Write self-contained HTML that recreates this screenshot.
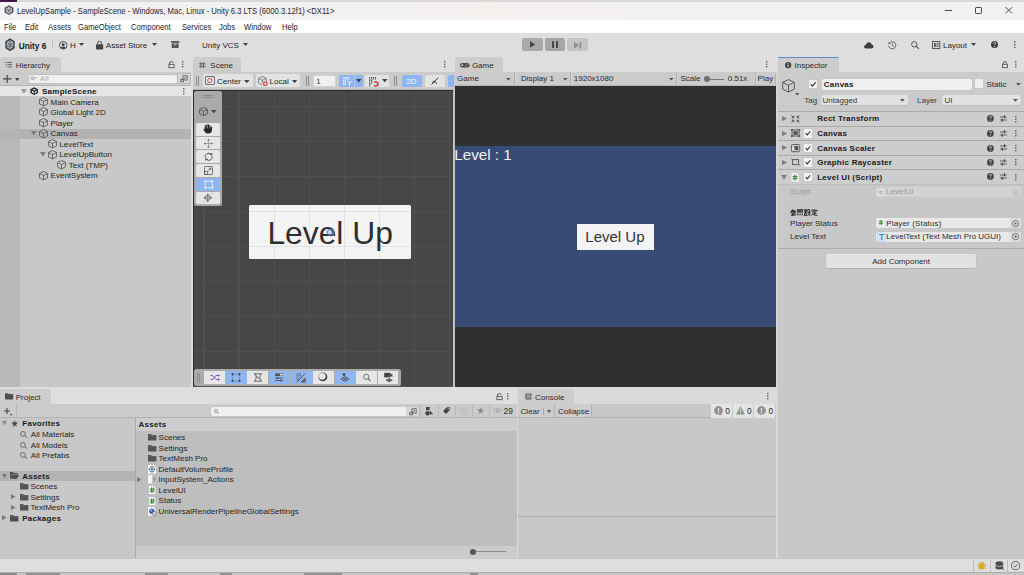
<!DOCTYPE html>
<html><head><meta charset="utf-8">
<style>
*{margin:0;padding:0;box-sizing:border-box}
html,body{width:1024px;height:575px;overflow:hidden;background:#c8c8c8;font-family:"Liberation Sans",sans-serif}
.a{position:absolute}
.t{position:absolute;white-space:nowrap;font-size:8px;line-height:10px;color:#1e1e1e;letter-spacing:0}
.b{font-weight:bold;letter-spacing:0.25px}
svg{position:absolute;overflow:visible}
.w{font-size:9px;transform:scaleX(0.85);transform-origin:0 0;letter-spacing:0;color:#1c1c1c}
</style></head><body>
<!-- ===== TITLE BAR ===== -->
<div class="a" style="left:0;top:0;width:1024px;height:2.3px;background:#d8d8d8"></div>
<div class="a" style="left:0;top:0;width:16.5px;height:2.3px;background:#3e1846"></div>
<div class="a" style="left:0;top:2.3px;width:1024px;height:17.7px;background:linear-gradient(90deg,#f3f1f4 0%,#f4f1f1 40%,#f5f0ee 48%,#f3f0f4 62%,#f3f0f3 100%)"></div>
<svg style="left:3.9px;top:5.4px" width="10" height="10.4" viewBox="0 0 10 10.4"><path d="M5 0.3L9.4 2.8V7.6L5 10.1L0.6 7.6V2.8Z" fill="#4d535b"/><path d="M5 1.8L7.9 3.5V7L5 8.7L2.1 7V3.5Z" fill="#b4b8bd"/><path d="M5 5.3V7.4M5 5.3L3.2 4.3M5 5.3L6.8 4.3" stroke="#4d535b" stroke-width="0.8"/></svg>
<div class="t w" style="left:16.5px;top:5.5px;color:#262626">LevelUpSample - SampleScene - Windows, Mac, Linux - Unity 6.3 LTS (6000.3.12f1) &lt;DX11&gt;</div>
<div class="a" style="left:944.8px;top:10px;width:7.5px;height:0.9px;background:#484848"></div>
<div class="a" style="left:974.5px;top:7.2px;width:7.3px;height:6.8px;border:0.9px solid #484848;border-radius:1.2px"></div>
<svg style="left:1005px;top:7.3px" width="7.5" height="6.5" viewBox="0 0 7.5 6.5"><path d="M0.2 0.1L7.3 6.4M7.3 0.1L0.2 6.4" stroke="#484848" stroke-width="0.9"/></svg>
<!-- ===== MENU BAR ===== -->
<div class="a" style="left:0;top:20px;width:1024px;height:13px;background:#ffffff"></div>
<div class="t w" style="left:3.7px;top:21.5px">File</div>
<div class="t w" style="left:25px;top:21.5px">Edit</div>
<div class="t w" style="left:47.5px;top:21.5px">Assets</div>
<div class="t w" style="left:78px;top:21.5px">GameObject</div>
<div class="t w" style="left:130.5px;top:21.5px">Component</div>
<div class="t w" style="left:181.7px;top:21.5px">Services</div>
<div class="t w" style="left:219px;top:21.5px">Jobs</div>
<div class="t w" style="left:243.7px;top:21.5px">Window</div>
<div class="t w" style="left:282px;top:21.5px">Help</div>
<!-- ===== MAIN TOOLBAR ===== -->
<div class="a" style="left:0;top:33px;width:1024px;height:24px;background:#dedede"></div>
<svg style="left:4.7px;top:38px" width="10" height="13.6" viewBox="0 0 10 13.6"><path d="M5 0.3L9.7 3.3V10.3L5 13.3L0.3 10.3V3.3Z" fill="#3f454d"/><path d="M5 2.2L8.2 4.1V9.3L5 11.2L1.8 9.3V4.1Z" fill="#aeb2b8"/><path d="M5 6.8V9.6M5 6.8L2.8 5.4M5 6.8L7.2 5.4" stroke="#3f454d" stroke-width="0.9"/><circle cx="5" cy="4.2" r="0.7" fill="#3f454d"/><circle cx="3" cy="8.4" r="0.7" fill="#3f454d"/><circle cx="7" cy="8.4" r="0.7" fill="#3f454d"/></svg>
<div class="t b" style="left:18.7px;top:40.9px;color:#1a1a1a;letter-spacing:0;font-size:8.3px">Unity 6</div>
<div class="a" style="left:51.5px;top:41.3px;width:0.9px;height:7.8px;background:#bdbdbd"></div>
<svg style="left:59px;top:40.7px" width="8.5" height="8.5" viewBox="0 0 8.5 8.5"><circle cx="4.25" cy="4.25" r="3.8" fill="none" stroke="#444" stroke-width="0.9"/><circle cx="4.25" cy="3.4" r="1.5" fill="#444"/><path d="M1.6 6.6Q4.25 4.4 6.9 6.6L6 7.5Q4.25 8.4 2.5 7.5Z" fill="#444"/></svg>
<div class="t" style="left:70px;top:40.9px">H</div>
<svg style="left:79px;top:43px" width="5" height="3" viewBox="0 0 5 3"><path d="M0 0H5L2.5 3Z" fill="#444"/></svg>
<svg style="left:95.8px;top:40.9px" width="7.2" height="8.5" viewBox="0 0 7.2 8.5"><path d="M1.6 3.4V2.3Q1.6 0.5 3.6 0.5Q5.6 0.5 5.6 2.3V3.4" fill="none" stroke="#444" stroke-width="1"/><rect x="0" y="3.2" width="7.2" height="5.3" rx="0.8" fill="#444"/></svg>
<div class="t" style="left:105.8px;top:40.9px">Asset Store</div>
<svg style="left:151.8px;top:43px" width="5" height="3" viewBox="0 0 5 3"><path d="M0 0H5L2.5 3Z" fill="#444"/></svg>
<svg style="left:170.6px;top:41.3px" width="8.3" height="7" viewBox="0 0 8.3 7"><rect x="0" y="0" width="8.3" height="1.8" fill="#555"/><rect x="0.7" y="2.4" width="6.9" height="4.6" fill="#555"/><rect x="2.8" y="3.3" width="2.7" height="0.9" fill="#dedede"/></svg>
<div class="t" style="left:202px;top:40.9px">Unity VCS</div>
<svg style="left:242.5px;top:43px" width="5" height="3" viewBox="0 0 5 3"><path d="M0 0H5L2.5 3Z" fill="#444"/></svg>
<!-- play controls -->
<div class="a" style="left:522px;top:38px;width:20.7px;height:13px;background:#a9a9a9;border-radius:2px"></div>
<div class="a" style="left:544.5px;top:38px;width:20.5px;height:13px;background:#a6a6a6;border-radius:2px"></div>
<div class="a" style="left:567px;top:38px;width:20.5px;height:13px;background:#c4c4c4;border-radius:2px"></div>
<svg style="left:530px;top:41.4px" width="5.3" height="6.8" viewBox="0 0 5.3 6.8"><path d="M0 0L5.3 3.4L0 6.8Z" fill="#474747"/></svg>
<div class="a" style="left:552px;top:41.4px;width:2px;height:6.8px;background:#474747;border-radius:0.6px"></div>
<div class="a" style="left:555.8px;top:41.4px;width:2px;height:6.8px;background:#474747;border-radius:0.6px"></div>
<svg style="left:574px;top:41.5px" width="7" height="6.5" viewBox="0 0 7 6.5"><path d="M0 0L5 3.25L0 6.5Z" fill="#8c8c8c"/><rect x="5.6" y="0" width="1.5" height="6.5" fill="#8c8c8c"/></svg>
<!-- right toolbar icons -->
<svg style="left:863.5px;top:41.5px" width="9.5" height="6.5" viewBox="0 0 9.5 6.5"><path d="M2 6.5Q0 6.5 0 4.6Q0 3 1.8 2.9Q2.2 0.3 4.8 0.3Q7.2 0.3 7.6 2.6Q9.5 2.9 9.5 4.6Q9.5 6.5 7.6 6.5Z" fill="#3d3d3d"/></svg>
<svg style="left:887.5px;top:40.7px" width="8.6" height="8.6" viewBox="0 0 8.6 8.6"><path d="M1.3 2.2A3.6 3.6 0 1 1 0.7 4.8" fill="none" stroke="#555" stroke-width="0.9"/><path d="M0.4 0.8L0.6 3.2L2.9 2.7Z" fill="#555"/><path d="M4.3 2.3V4.5L5.8 5.6" fill="none" stroke="#555" stroke-width="0.9"/></svg>
<svg style="left:911.3px;top:40.8px" width="8.2" height="8.2" viewBox="0 0 8.2 8.2"><circle cx="3.3" cy="3.3" r="2.7" fill="none" stroke="#555" stroke-width="1"/><path d="M5.2 5.2L7.9 7.9" stroke="#555" stroke-width="1.2"/></svg>
<svg style="left:932.3px;top:41px" width="8.3" height="8" viewBox="0 0 8.3 8"><rect x="0.5" y="0.5" width="7.3" height="7" fill="none" stroke="#555" stroke-width="1"/><rect x="2" y="2" width="1.8" height="4" fill="#555"/><rect x="4.6" y="2" width="1.8" height="1.6" fill="#555"/><rect x="4.6" y="4.4" width="1.8" height="1.6" fill="#555"/></svg>
<div class="t" style="left:943px;top:40.9px">Layout</div>
<svg style="left:971px;top:43px" width="5" height="3" viewBox="0 0 5 3"><path d="M0 0H5L2.5 3Z" fill="#444"/></svg>
<svg style="left:990.5px;top:41.3px" width="7" height="7" viewBox="0 0 7 7"><circle cx="3.5" cy="3.5" r="3.5" fill="#3a3a3a"/><path d="M2.3 2.6Q2.3 1.4 3.5 1.4Q4.7 1.4 4.7 2.5Q4.7 3.2 3.9 3.6V4.3" fill="none" stroke="#dedede" stroke-width="0.9"/><circle cx="3.6" cy="5.4" r="0.55" fill="#dedede"/></svg>
<svg style="left:1014.3px;top:41.3px" width="1.6" height="7" viewBox="0 0 1.6 7"><circle cx="0.8" cy="0.8" r="0.8" fill="#444"/><circle cx="0.8" cy="3.5" r="0.8" fill="#444"/><circle cx="0.8" cy="6.2" r="0.8" fill="#444"/></svg>
<!-- ===== PANEL BASE ===== -->
<!-- hierarchy -->
<div class="a" style="left:0;top:57px;width:192px;height:15px;background:#dedede"></div>
<div class="a" style="left:0;top:57px;width:60.6px;height:15px;background:#cdcdcd;border-radius:3px 3px 0 0"></div>
<svg style="left:5px;top:61.8px" width="7" height="5.4" viewBox="0 0 7 5.4"><path d="M0 0.5H1.2M2.2 0.5H7M0.8 2.7H2M2.8 2.7H7M1.5 4.9H2.6M3.4 4.9H7" stroke="#555" stroke-width="0.9"/></svg>
<div class="t" style="left:15.7px;top:60.6px;color:#2a2a2a">Hierarchy</div>
<svg style="left:167.8px;top:61px" width="7" height="7" viewBox="0 0 7 7"><path d="M1.5 3.3V2Q1.5 0.5 3.3 0.5Q5 0.5 5 2" fill="none" stroke="#555" stroke-width="0.9"/><rect x="0.9" y="3.3" width="5.2" height="3.4" fill="none" stroke="#555" stroke-width="0.9"/></svg>
<svg style="left:182px;top:61px" width="1.6" height="6.5" viewBox="0 0 1.6 6.5"><circle cx="0.8" cy="0.75" r="0.75" fill="#444"/><circle cx="0.8" cy="3.25" r="0.75" fill="#444"/><circle cx="0.8" cy="5.75" r="0.75" fill="#444"/></svg>
<div class="a" style="left:0;top:72px;width:192px;height:13.6px;background:#cbcbcb"></div>
<div class="a" style="left:0;top:84.8px;width:192px;height:0.8px;background:#b5b5b5"></div>
<svg style="left:3.3px;top:75px" width="8.4" height="7.7" viewBox="0 0 8.4 7.7"><path d="M0 3.85H8.4M4.2 0V7.7" stroke="#444" stroke-width="1.2"/></svg>
<svg style="left:14.6px;top:77.5px" width="4.4" height="3" viewBox="0 0 4.4 3"><path d="M0 0H4.4L2.2 3Z" fill="#444"/></svg>
<div class="a" style="left:27.8px;top:73.5px;width:150px;height:10.3px;background:#f0f0f0;border-radius:2.5px;border:0.6px solid #c2c2c2"></div>
<svg style="left:30.3px;top:76px" width="6" height="5" viewBox="0 0 6 5"><circle cx="2" cy="2" r="1.5" fill="none" stroke="#999" stroke-width="0.8"/><path d="M3.1 3.1L4.2 4.2M4.6 1.8H6L5.3 2.7Z" stroke="#999" stroke-width="0.7" fill="#999"/></svg>
<div class="t" style="left:39.8px;top:73.6px;color:#b0b0b0">All</div>
<div class="a" style="left:177.3px;top:73.3px;width:13.5px;height:10.9px;background:#d6d6d6;border:0.6px solid #b9b9b9;border-radius:0 2px 2px 0"></div>
<svg style="left:179.5px;top:74.8px" width="8" height="8" viewBox="0 0 8 8"><rect x="3" y="0.8" width="4.2" height="4.2" fill="none" stroke="#555" stroke-width="0.8"/><rect x="0.8" y="4.2" width="2.6" height="2.6" fill="none" stroke="#555" stroke-width="0.8"/><path d="M4 4L6.3 1.7" stroke="#555" stroke-width="0.8"/></svg>
<div class="a" style="left:0;top:85.6px;width:192px;height:10.6px;background:#e5e5e5"></div>
<svg style="left:21.2px;top:89.2px" width="5.8" height="4.8" viewBox="0 0 5.8 4.8"><path d="M0 0H5.8L2.9 4.8Z" fill="#9a9a9a"/></svg>
<svg style="left:30.3px;top:87px" width="8.4" height="8.4" viewBox="0 0 8.4 8.4"><path d="M4.2 0.3L8 2.3V6.1L4.2 8.1L0.4 6.1V2.3Z" fill="#1e1e1e"/><path d="M4.2 1.8L6.6 3.1V5.6L4.2 6.8L1.8 5.6V3.1Z" fill="#e5e5e5"/><path d="M4.2 4.1V6.8M4.2 4.1L1.8 3.1M4.2 4.1L6.6 3.1" stroke="#1e1e1e" stroke-width="1.1"/></svg>
<div class="t b" style="left:42px;top:87.3px;color:#141414">SampleScene</div>
<svg style="left:182.6px;top:88px" width="1.6" height="6.5" viewBox="0 0 1.6 6.5"><circle cx="0.8" cy="0.75" r="0.75" fill="#444"/><circle cx="0.8" cy="3.25" r="0.75" fill="#444"/><circle cx="0.8" cy="5.75" r="0.75" fill="#444"/></svg>
<div class="a" style="left:0;top:96.2px;width:192px;height:291px;background:#c8c8c8"></div>
<div class="a" style="left:0;top:96.2px;width:20px;height:291px;background:#b9b9b9"></div>
<div class="a" style="left:0;top:128.8px;width:192px;height:9.8px;background:#b3b3b3"></div>
<svg style="left:38.8px;top:96.9px" width="9" height="9.4" viewBox="0 0 9 9.4"><path d="M4.5 0.5L8.5 2.5V6.9L4.5 8.9L0.5 6.9V2.5Z M0.5 2.5L4.5 4.5L8.5 2.5 M4.5 4.5V8.9" fill="none" stroke="#5a5a5a" stroke-width="0.85" stroke-linejoin="round"/></svg>
<div class="t" style="left:50.6px;top:97.7px">Main Camera</div>
<svg style="left:38.8px;top:107.4px" width="9" height="9.4" viewBox="0 0 9 9.4"><path d="M4.5 0.5L8.5 2.5V6.9L4.5 8.9L0.5 6.9V2.5Z M0.5 2.5L4.5 4.5L8.5 2.5 M4.5 4.5V8.9" fill="none" stroke="#5a5a5a" stroke-width="0.85" stroke-linejoin="round"/></svg>
<div class="t" style="left:50.6px;top:108.2px">Global Light 2D</div>
<svg style="left:38.8px;top:117.9px" width="9" height="9.4" viewBox="0 0 9 9.4"><path d="M4.5 0.5L8.5 2.5V6.9L4.5 8.9L0.5 6.9V2.5Z M0.5 2.5L4.5 4.5L8.5 2.5 M4.5 4.5V8.9" fill="none" stroke="#5a5a5a" stroke-width="0.85" stroke-linejoin="round"/></svg>
<div class="t" style="left:50.6px;top:118.7px">Player</div>
<svg style="left:30.6px;top:131.2px" width="5.8" height="4.8" viewBox="0 0 5.8 4.8"><path d="M0 0H5.8L2.9 4.8Z" fill="#7d7d7d"/></svg>
<svg style="left:38.8px;top:128.5px" width="9" height="9.4" viewBox="0 0 9 9.4"><path d="M4.5 0.5L8.5 2.5V6.9L4.5 8.9L0.5 6.9V2.5Z M0.5 2.5L4.5 4.5L8.5 2.5 M4.5 4.5V8.9" fill="none" stroke="#5a5a5a" stroke-width="0.85" stroke-linejoin="round"/></svg>
<div class="t" style="left:50.6px;top:129.3px">Canvas</div>
<svg style="left:47.5px;top:139.0px" width="9" height="9.4" viewBox="0 0 9 9.4"><path d="M4.5 0.5L8.5 2.5V6.9L4.5 8.9L0.5 6.9V2.5Z M0.5 2.5L4.5 4.5L8.5 2.5 M4.5 4.5V8.9" fill="none" stroke="#5a5a5a" stroke-width="0.85" stroke-linejoin="round"/></svg>
<div class="t" style="left:59.4px;top:139.8px">LevelText</div>
<svg style="left:39.8px;top:152.2px" width="5.8" height="4.8" viewBox="0 0 5.8 4.8"><path d="M0 0H5.8L2.9 4.8Z" fill="#7d7d7d"/></svg>
<svg style="left:47.5px;top:149.5px" width="9" height="9.4" viewBox="0 0 9 9.4"><path d="M4.5 0.5L8.5 2.5V6.9L4.5 8.9L0.5 6.9V2.5Z M0.5 2.5L4.5 4.5L8.5 2.5 M4.5 4.5V8.9" fill="none" stroke="#5a5a5a" stroke-width="0.85" stroke-linejoin="round"/></svg>
<div class="t" style="left:59.4px;top:150.3px">LevelUpButton</div>
<svg style="left:56.8px;top:160.0px" width="9" height="9.4" viewBox="0 0 9 9.4"><path d="M4.5 0.5L8.5 2.5V6.9L4.5 8.9L0.5 6.9V2.5Z M0.5 2.5L4.5 4.5L8.5 2.5 M4.5 4.5V8.9" fill="none" stroke="#5a5a5a" stroke-width="0.85" stroke-linejoin="round"/></svg>
<div class="t" style="left:68.8px;top:160.8px">Text (TMP)</div>
<svg style="left:38.8px;top:170.5px" width="9" height="9.4" viewBox="0 0 9 9.4"><path d="M4.5 0.5L8.5 2.5V6.9L4.5 8.9L0.5 6.9V2.5Z M0.5 2.5L4.5 4.5L8.5 2.5 M4.5 4.5V8.9" fill="none" stroke="#5a5a5a" stroke-width="0.85" stroke-linejoin="round"/></svg>
<div class="t" style="left:50.6px;top:171.3px">EventSystem</div>
<!-- scene -->
<div class="a" style="left:191.4px;top:57px;width:263.6px;height:15px;background:#dedede"></div>
<div class="a" style="left:191.4px;top:72px;width:1.4px;height:315px;background:#dedede"></div>
<div class="a" style="left:193px;top:57px;width:48.3px;height:15px;background:#cdcdcd;border-radius:3px 3px 0 0"></div>
<svg style="left:199.3px;top:61.8px" width="6.6" height="6.2" viewBox="0 0 6.6 6.2"><path d="M0 1.8H6.6M0 4.4H6.6M1.9 0V6.2M4.6 0V6.2" stroke="#555" stroke-width="0.85"/></svg>
<div class="t" style="left:210.3px;top:60.6px;color:#2a2a2a">Scene</div>
<svg style="left:444.2px;top:61.3px" width="1.6" height="6.5" viewBox="0 0 1.6 6.5"><circle cx="0.8" cy="0.75" r="0.75" fill="#444"/><circle cx="0.8" cy="3.25" r="0.75" fill="#444"/><circle cx="0.8" cy="5.75" r="0.75" fill="#444"/></svg>
<div class="a" style="left:193px;top:72px;width:261px;height:18px;background:#cbcbcb"></div>
<div class="a" style="left:193px;top:88.8px;width:261px;height:1.2px;background:#b3b3b3"></div>
<div class="a" style="left:196px;top:75.5px;width:0.9px;height:10.3px;background:#8f8f8f"></div><div class="a" style="left:198.2px;top:75.5px;width:0.9px;height:10.3px;background:#8f8f8f"></div>
<div class="a" style="left:202.9px;top:74.4px;width:50.3px;height:12.8px;background:#e3e3e3;border-radius:1.5px"></div>
<div class="a" style="left:205.3px;top:76.1px;width:9.5px;height:9.4px;border:0.9px solid #707070;border-radius:1px"></div>
<svg style="left:205.3px;top:76.1px" width="9.5" height="9.4" viewBox="0 0 9.5 9.4"><circle cx="4.75" cy="4.5" r="2.1" fill="none" stroke="#d24a4a" stroke-width="1"/><path d="M1.6 7.9L2.6 6.9M7.9 1.5L6.9 2.5" stroke="#707070" stroke-width="0.7"/></svg>
<div class="t" style="left:217px;top:76.9px;color:#262626">Center</div>
<svg style="left:244px;top:79.8px" width="5.6" height="3.3" viewBox="0 0 5.6 3.3"><path d="M0 0H5.6L2.8 3.3Z" fill="#444"/></svg>
<div class="a" style="left:255.7px;top:74.4px;width:44.8px;height:12.8px;background:#e3e3e3;border-radius:1.5px"></div>
<svg style="left:258px;top:75.8px" width="10" height="10.5" viewBox="0 0 10 10.5"><path d="M4.3 0.5L8.3 2.4V5.5M4.3 0.5L0.4 2.4V7.1L4.3 9.1M0.4 2.4L4.3 4.3L8.3 2.4M4.3 4.3V7" fill="none" stroke="#6a6a6a" stroke-width="0.8" stroke-linejoin="round"/><circle cx="7.3" cy="7.7" r="2.4" fill="#d64545"/><path d="M7.3 6.4V9M6 7.7H8.6" stroke="#fff" stroke-width="0.8"/></svg>
<div class="t" style="left:269.6px;top:76.9px;color:#262626">Local</div>
<svg style="left:291.5px;top:79.8px" width="5.2" height="3.3" viewBox="0 0 5.2 3.3"><path d="M0 0H5.2L2.6 3.3Z" fill="#444"/></svg>
<div class="a" style="left:306px;top:75.5px;width:0.9px;height:10.3px;background:#8f8f8f"></div><div class="a" style="left:308.2px;top:75.5px;width:0.9px;height:10.3px;background:#8f8f8f"></div>
<div class="a" style="left:313px;top:74.8px;width:23.4px;height:12.3px;background:#f0f0f0;border-radius:2px;border:0.6px solid #d4d4d4"></div>
<div class="t" style="left:316.2px;top:77.2px;color:#333">1</div>
<div class="a" style="left:338.5px;top:74.8px;width:24.2px;height:12.3px;background:#8db5f0;border-radius:1.5px"></div>
<div class="a" style="left:353.8px;top:74.8px;width:0.8px;height:12.3px;background:#a9c7f3"></div>
<svg style="left:342.6px;top:76.6px" width="8.6" height="9" viewBox="0 0 8.6 9"><rect x="0.1499999999999999" y="0.04999999999999993" width="1.1" height="1.1" fill="#f4f8fe"/><rect x="0.1499999999999999" y="1.45" width="1.1" height="1.1" fill="#f4f8fe"/><rect x="0.1499999999999999" y="2.8499999999999996" width="1.1" height="1.1" fill="#f4f8fe"/><rect x="0.1499999999999999" y="4.25" width="1.1" height="1.1" fill="#f4f8fe"/><rect x="0.1499999999999999" y="5.65" width="1.1" height="1.1" fill="#f4f8fe"/><rect x="0.1499999999999999" y="7.05" width="1.1" height="1.1" fill="#f4f8fe"/><rect x="1.8499999999999999" y="0.04999999999999993" width="1.1" height="1.1" fill="#f4f8fe"/><rect x="1.8499999999999999" y="1.45" width="1.1" height="1.1" fill="#f4f8fe"/><rect x="1.8499999999999999" y="2.8499999999999996" width="1.1" height="1.1" fill="#f4f8fe"/><rect x="1.8499999999999999" y="4.25" width="1.1" height="1.1" fill="#f4f8fe"/><rect x="1.8499999999999999" y="5.65" width="1.1" height="1.1" fill="#f4f8fe"/><rect x="1.8499999999999999" y="7.05" width="1.1" height="1.1" fill="#f4f8fe"/><rect x="3.55" y="0.04999999999999993" width="1.1" height="1.1" fill="#f4f8fe"/><rect x="3.55" y="1.45" width="1.1" height="1.1" fill="#f4f8fe"/><rect x="5.25" y="0.04999999999999993" width="1.1" height="1.1" fill="#f4f8fe"/><rect x="5.25" y="1.45" width="1.1" height="1.1" fill="#f4f8fe"/><path d="M4.6 4L6.5 6.4L8.4 4M6.5 6.4V9" fill="none" stroke="#f4f8fe" stroke-width="1"/></svg>
<svg style="left:355.7px;top:79.1px" width="5.5" height="3.6" viewBox="0 0 5.5 3.6"><path d="M0 0H5.5L2.75 3.6Z" fill="#3a3f48"/></svg>
<div class="a" style="left:365px;top:74.8px;width:24px;height:12.3px;background:#e3e3e3;border-radius:1.5px"></div>
<svg style="left:368.8px;top:76.6px" width="9.5" height="9.6" viewBox="0 0 9.5 9.6"><rect x="0.1499999999999999" y="0.04999999999999993" width="1.1" height="1.1" fill="#4a4a4a"/><rect x="0.1499999999999999" y="1.45" width="1.1" height="1.1" fill="#4a4a4a"/><rect x="0.1499999999999999" y="2.8499999999999996" width="1.1" height="1.1" fill="#4a4a4a"/><rect x="0.1499999999999999" y="4.25" width="1.1" height="1.1" fill="#4a4a4a"/><rect x="0.1499999999999999" y="5.65" width="1.1" height="1.1" fill="#4a4a4a"/><rect x="0.1499999999999999" y="7.05" width="1.1" height="1.1" fill="#4a4a4a"/><rect x="0.1499999999999999" y="8.45" width="1.1" height="1.1" fill="#4a4a4a"/><rect x="2.05" y="0.04999999999999993" width="1.1" height="1.1" fill="#4a4a4a"/><rect x="2.05" y="1.45" width="1.1" height="1.1" fill="#4a4a4a"/><rect x="2.05" y="2.8499999999999996" width="1.1" height="1.1" fill="#4a4a4a"/><rect x="2.05" y="4.25" width="1.1" height="1.1" fill="#4a4a4a"/><rect x="2.05" y="5.65" width="1.1" height="1.1" fill="#4a4a4a"/><rect x="3.95" y="0.04999999999999993" width="1.1" height="1.1" fill="#4a4a4a"/><rect x="3.95" y="1.45" width="1.1" height="1.1" fill="#4a4a4a"/><rect x="5.8500000000000005" y="0.04999999999999993" width="1.1" height="1.1" fill="#4a4a4a"/><rect x="5.8500000000000005" y="1.45" width="1.1" height="1.1" fill="#4a4a4a"/><path d="M4.8 5H6.8Q9 5 9 6.9Q9 8.8 6.8 8.8H4.8" fill="none" stroke="#d03838" stroke-width="1.5"/></svg>
<svg style="left:381.9px;top:79.1px" width="5.5" height="3.6" viewBox="0 0 5.5 3.6"><path d="M0 0H5.5L2.75 3.6Z" fill="#444"/></svg>
<div class="a" style="left:394px;top:75.5px;width:0.9px;height:10.3px;background:#8f8f8f"></div><div class="a" style="left:396.2px;top:75.5px;width:0.9px;height:10.3px;background:#8f8f8f"></div>
<div class="a" style="left:401.5px;top:74.8px;width:20.9px;height:12.3px;background:#8db5f0;border-radius:1.5px"></div>
<div class="t" style="left:406.2px;top:77px;color:#f2f6fd">2D</div>
<div class="a" style="left:425px;top:74.8px;width:20.4px;height:12.3px;background:#e3e3e3;border-radius:1.5px"></div>
<svg style="left:431.2px;top:77px" width="8" height="8" viewBox="0 0 8 8"><path d="M0.5 7.5L7.3 0.7" stroke="#333" stroke-width="1"/><path d="M1 4.5H2.5L4.5 2.5V6.5L2.5 5.5H1Z" fill="#555"/><path d="M5.6 5.3V7.3" stroke="#555" stroke-width="0.7"/></svg>
<div class="a" style="left:447.6px;top:74.8px;width:6px;height:12.3px;background:#8db5f0;border-radius:1.5px 0 0 1.5px"></div>
<div class="a" style="left:192.8px;top:89.8px;width:262px;height:297.6px;background:#2e2e2e"></div>
<div class="a" style="left:194px;top:90.6px;width:259.6px;height:296px;background:#474747;overflow:hidden"><div class="a" style="left:9.4px;top:0;width:1.4px;height:296px;background:#4f4f4f"></div><div class="a" style="left:44.45px;top:0;width:1.4px;height:296px;background:#4f4f4f"></div><div class="a" style="left:79.5px;top:0;width:1.4px;height:296px;background:#4f4f4f"></div><div class="a" style="left:114.55px;top:0;width:1.4px;height:296px;background:#4f4f4f"></div><div class="a" style="left:149.6px;top:0;width:1.4px;height:296px;background:#4f4f4f"></div><div class="a" style="left:184.65px;top:0;width:1.4px;height:296px;background:#4f4f4f"></div><div class="a" style="left:219.7px;top:0;width:1.4px;height:296px;background:#4f4f4f"></div><div class="a" style="left:254.75px;top:0;width:1.4px;height:296px;background:#4f4f4f"></div><div class="a" style="top:15.1px;left:0;height:1.4px;width:260px;background:#4f4f4f"></div><div class="a" style="top:50.15px;left:0;height:1.4px;width:260px;background:#4f4f4f"></div><div class="a" style="top:85.2px;left:0;height:1.4px;width:260px;background:#4f4f4f"></div><div class="a" style="top:120.25px;left:0;height:1.4px;width:260px;background:#4f4f4f"></div><div class="a" style="top:155.3px;left:0;height:1.4px;width:260px;background:#4f4f4f"></div><div class="a" style="top:190.35px;left:0;height:1.4px;width:260px;background:#4f4f4f"></div><div class="a" style="top:225.4px;left:0;height:1.4px;width:260px;background:#4f4f4f"></div><div class="a" style="top:260.45px;left:0;height:1.4px;width:260px;background:#4f4f4f"></div><div class="a" style="top:295.5px;left:0;height:1.4px;width:260px;background:#4f4f4f"></div></div>
<div class="a" style="left:194px;top:91px;width:28px;height:114.7px;background:#aaaaaa;border-radius:2.5px"></div>
<div class="a" style="left:202.8px;top:95px;width:10.4px;height:0.9px;background:#8a8a8a"></div><div class="a" style="left:202.8px;top:97px;width:10.4px;height:0.9px;background:#8a8a8a"></div>
<svg style="left:198.9px;top:107px" width="9" height="9" viewBox="0 0 9 9"><path d="M4.5 0.4L8.4 2.4V6.6L4.5 8.6L0.6 6.6V2.4Z M0.6 2.4L4.5 4.4L8.4 2.4 M4.5 4.4V8.6" fill="none" stroke="#4a4a4a" stroke-width="0.8" stroke-linejoin="round"/></svg>
<svg style="left:210.7px;top:110px" width="5.5" height="3.2" viewBox="0 0 5.5 3.2"><path d="M0 0H5.5L2.75 3.2Z" fill="#444"/></svg>
<div class="a" style="left:196.4px;top:122.8px;width:23.7px;height:12.9px;background:#e6e6e6;border-radius:1.5px"></div>
<div class="a" style="left:196.4px;top:136.6px;width:23.7px;height:12.9px;background:#e6e6e6;border-radius:1.5px"></div>
<div class="a" style="left:196.4px;top:150.4px;width:23.7px;height:12.9px;background:#e6e6e6;border-radius:1.5px"></div>
<div class="a" style="left:196.4px;top:164.2px;width:23.7px;height:12.9px;background:#e6e6e6;border-radius:1.5px"></div>
<div class="a" style="left:196.4px;top:178px;width:23.7px;height:12.9px;background:#8fb6f0;border-radius:1.5px"></div>
<div class="a" style="left:196.4px;top:191.5px;width:23.7px;height:12.9px;background:#e6e6e6;border-radius:1.5px"></div>
<svg style="left:203.3px;top:124.4px" width="9.5" height="9.6" viewBox="0 0 9.5 9.6"><g fill="none" stroke="#262626" stroke-linecap="round" stroke-width="1.25"><path d="M2.4 5.6V2"/><path d="M3.9 5V1"/><path d="M5.4 5V0.9"/><path d="M6.9 5.2V1.8"/><path d="M8.4 5.6V3.2"/></g><path d="M1.8 4.6L2.4 4.2H8.9V6.8Q8.5 9.4 6 9.4H4Q2.8 9.4 2 8L0.3 5.4Q0.6 4.6 1.3 4.9Z" fill="#262626"/></svg>
<svg style="left:203.8px;top:138.6px" width="9" height="9" viewBox="0 0 9 9"><path d="M4.5 1V8M1 4.5H8" stroke="#555" stroke-width="0.75" stroke-dasharray="1 0.8"/><path d="M4.5 0L5.8 1.5H3.2ZM4.5 9L5.8 7.5H3.2ZM0 4.5L1.5 3.2V5.8ZM9 4.5L7.5 3.2V5.8Z" fill="#555"/></svg>
<svg style="left:203.5px;top:152px" width="9.5" height="9.6" viewBox="0 0 9.5 9.6"><path d="M1.3 5.5A3.5 3.5 0 0 1 7 2.1" fill="none" stroke="#505050" stroke-width="0.95"/><path d="M8.2 4.1A3.5 3.5 0 0 1 2.5 7.5" fill="none" stroke="#505050" stroke-width="0.95"/><path d="M8.4 0.8L8 3.6L5.5 2.4Z" fill="#505050"/><path d="M1.1 8.8L1.5 6L4 7.2Z" fill="#505050"/></svg>
<svg style="left:204px;top:166.2px" width="9" height="9" viewBox="0 0 9 9"><rect x="0.5" y="0.5" width="8" height="8" rx="0.6" fill="none" stroke="#5a5a5a" stroke-width="0.8"/><rect x="0.5" y="5.3" width="3.2" height="3.2" fill="none" stroke="#5a5a5a" stroke-width="0.8"/><path d="M4.3 4.7L6.8 2.2M4.7 2.2H6.8V4.3" fill="none" stroke="#5a5a5a" stroke-width="0.8"/></svg>
<svg style="left:203.6px;top:180px" width="9.5" height="9" viewBox="0 0 9.5 9"><rect x="1.2" y="1.2" width="7.1" height="6.6" fill="none" stroke="#f4f7fc" stroke-width="0.8"/><circle cx="1.2" cy="1.2" r="0.9" fill="#f4f7fc"/><circle cx="8.3" cy="1.2" r="0.9" fill="#f4f7fc"/><circle cx="1.2" cy="7.8" r="0.9" fill="#f4f7fc"/><circle cx="8.3" cy="7.8" r="0.9" fill="#f4f7fc"/></svg>
<svg style="left:203.3px;top:193.3px" width="10" height="9.6" viewBox="0 0 10 9.6"><circle cx="4.8" cy="4.8" r="2.6" fill="none" stroke="#555" stroke-width="0.7"/><path d="M4.8 1.2V8.4M1.2 4.8H8.4" stroke="#555" stroke-width="0.7"/><path d="M4.8 0.6L5.8 1.8H3.8ZM4.8 9L5.8 7.8H3.8ZM0.6 4.8L1.8 3.8V5.8ZM9 4.8L7.8 3.8V5.8Z" fill="#555"/><path d="M0.4 9.2L1.4 8.2M9.2 0.4L8.2 1.4" stroke="#555" stroke-width="0.6"/></svg>
<div class="a" style="left:249.1px;top:205.1px;width:162.3px;height:54.3px;background:#f4f4f4;border-radius:1.5px;overflow:hidden"><div class="a" style="left:24.5px;top:0;width:1.2px;height:55px;background:#e3e3e3"></div><div class="a" style="left:59.55px;top:0;width:1.2px;height:55px;background:#e3e3e3"></div><div class="a" style="left:94.6px;top:0;width:1.2px;height:55px;background:#e3e3e3"></div><div class="a" style="left:129.65px;top:0;width:1.2px;height:55px;background:#e3e3e3"></div><div class="a" style="top:5.85px;left:0;height:1.2px;width:163px;background:#e3e3e3"></div><div class="a" style="top:40.9px;left:0;height:1.2px;width:163px;background:#e3e3e3"></div></div>
<div class="t" style="left:267.4px;top:214.6px;font-size:31.8px;line-height:36px;color:#2e2e2e">Level Up</div>
<svg style="left:326px;top:228.3px" width="9" height="9" viewBox="0 0 9 9"><circle cx="4.5" cy="4.5" r="3.3" fill="rgba(120,160,220,0.35)" stroke="#4b79c0" stroke-width="1.3" stroke-opacity="0.75"/></svg>
<div class="a" style="left:194.1px;top:369.3px;width:206.7px;height:16.3px;background:#aaaaaa;border-radius:2.5px"></div>
<div class="a" style="left:197px;top:372.5px;width:0.9px;height:10.5px;background:#8f8f8f"></div><div class="a" style="left:199.2px;top:372.5px;width:0.9px;height:10.5px;background:#8f8f8f"></div>
<div class="a" style="left:204.2px;top:371.1px;width:21.1px;height:12.9px;background:#e6e6e6"></div>
<div class="a" style="left:225.3px;top:371.1px;width:21.6px;height:12.9px;background:#8fb6f0"></div>
<div class="a" style="left:246.9px;top:371.1px;width:20.9px;height:12.9px;background:#e6e6e6"></div>
<div class="a" style="left:268.5px;top:371.1px;width:21.4px;height:12.9px;background:#8fb6f0"></div>
<div class="a" style="left:290.5px;top:371.1px;width:22.4px;height:12.9px;background:#8fb6f0"></div>
<div class="a" style="left:312.9px;top:371.1px;width:20.9px;height:12.9px;background:#e6e6e6"></div>
<div class="a" style="left:334.5px;top:371.1px;width:21.7px;height:12.9px;background:#8fb6f0"></div>
<div class="a" style="left:356.2px;top:371.1px;width:21.3px;height:12.9px;background:#e6e6e6"></div>
<div class="a" style="left:378.2px;top:371.1px;width:20.1px;height:12.9px;background:#e6e6e6"></div>
<svg style="left:209.9px;top:373px" width="10" height="9" viewBox="0 0 10 9"><path d="M0.5 2.5H2.5L6 6.5H8M0.5 6.5H2.5L6 2.5H8" fill="none" stroke="#7744cc" stroke-width="0.9"/><path d="M8 1.2L10 2.5L8 3.8ZM8 5.2L10 6.5L8 7.8Z" fill="#7744cc"/></svg>
<svg style="left:231.0px;top:373px" width="10" height="9" viewBox="0 0 10 9"><rect x="1.5" y="1" width="7" height="7" fill="none" stroke="#444" stroke-width="0.7" stroke-dasharray="1 1"/><rect x="0.6" y="0.1" width="1.8" height="1.8" fill="#444"/><rect x="7.6" y="0.1" width="1.8" height="1.8" fill="#444"/><rect x="0.6" y="7.1" width="1.8" height="1.8" fill="#444"/><rect x="7.6" y="7.1" width="1.8" height="1.8" fill="#444"/></svg>
<svg style="left:252.6px;top:373px" width="10" height="9" viewBox="0 0 10 9"><path d="M1 0.8H9M1 8.2H9M1.5 0.8Q5 4.5 1.5 8.2M8.5 0.8Q5 4.5 8.5 8.2M3 2.5L7 6.5" fill="none" stroke="#444" stroke-width="0.8"/></svg>
<svg style="left:274.2px;top:373px" width="10" height="9" viewBox="0 0 10 9"><rect x="1" y="0.5" width="8" height="2.5" fill="#555"/><rect x="6" y="1" width="2.6" height="1.5" fill="#e6e6e6"/><path d="M1 5H9M1 7.5H9" stroke="#444" stroke-width="0.8"/><path d="M3.5 4V6M6.5 6.5V8.5" stroke="#444" stroke-width="1"/></svg>
<svg style="left:296.4px;top:372.6px" width="10" height="9.6" viewBox="0 0 10 9.6"><rect x="0.5" y="0.5" width="1" height="1" fill="#4a4a4a"/><rect x="0.5" y="2.3" width="1" height="1" fill="#4a4a4a"/><rect x="0.5" y="4.1" width="1" height="1" fill="#4a4a4a"/><rect x="0.5" y="5.9" width="1" height="1" fill="#4a4a4a"/><rect x="2.3" y="0.5" width="1" height="1" fill="#4a4a4a"/><rect x="2.3" y="2.3" width="1" height="1" fill="#4a4a4a"/><rect x="2.3" y="4.1" width="1" height="1" fill="#4a4a4a"/><rect x="2.3" y="5.9" width="1" height="1" fill="#4a4a4a"/><rect x="4.1" y="0.5" width="1" height="1" fill="#4a4a4a"/><rect x="4.1" y="2.3" width="1" height="1" fill="#4a4a4a"/><path d="M0.8 9.2L9.2 0.6" stroke="#4a4a4a" stroke-width="0.9"/><path d="M9.6 4.2V9.4H4.4Z" fill="#5a5a5a"/></svg>
<svg style="left:318.4px;top:372.4px" width="10" height="10" viewBox="0 0 10 10"><circle cx="4.9" cy="4.9" r="4.4" fill="#3c3c3c"/><circle cx="4.3" cy="4.3" r="3.4" fill="#e6e6e6"/></svg>
<svg style="left:340.2px;top:373px" width="10" height="9" viewBox="0 0 10 9"><circle cx="4" cy="1.5" r="1.3" fill="#333"/><path d="M5 3.5L9 6L5 8.5L1 6Z" fill="none" stroke="#444" stroke-width="0.8"/><path d="M3 4.7L7 7.3M7 4.7L3 7.3" stroke="#444" stroke-width="0.7"/></svg>
<svg style="left:361.9px;top:373px" width="10" height="9" viewBox="0 0 10 9"><circle cx="4.2" cy="3.8" r="2.6" fill="none" stroke="#555" stroke-width="0.8"/><path d="M6.1 5.7L8.3 7.9" stroke="#555" stroke-width="1.1"/></svg>
<svg style="left:383.9px;top:373px" width="10" height="9" viewBox="0 0 10 9"><rect x="0.2" y="-0.2" width="6.4" height="4.6" fill="#444"/><path d="M6.4 1.6L8.4 0.4V4L6.4 2.8Z" fill="#444"/><path d="M2.2 7.2Q5.2 4.2 8.2 7.2Q5.2 10.2 2.2 7.2Z" fill="#e6e6e6" stroke="#444" stroke-width="0.9"/><circle cx="5.2" cy="7.2" r="1.1" fill="#444"/></svg>
<!-- game -->
<div class="a" style="left:455px;top:57px;width:322px;height:15px;background:#dedede"></div>
<div class="a" style="left:455px;top:57.2px;width:47.6px;height:14.8px;background:#cdcdcd;border-radius:3px 3px 0 0"></div>
<svg style="left:460.4px;top:62.8px" width="9.5" height="4.4" viewBox="0 0 9.5 4.4"><rect x="0" y="0" width="9.5" height="4.4" rx="2.2" fill="#4a4a4a"/><circle cx="2.3" cy="2.2" r="1" fill="#cdcdcd"/><path d="M5.5 3.3L7.8 1.1" stroke="#cdcdcd" stroke-width="0.8"/></svg>
<div class="t" style="left:471.9px;top:60.6px;color:#2a2a2a">Game</div>
<svg style="left:766.3px;top:61.3px" width="1.6" height="6.5" viewBox="0 0 1.6 6.5"><circle cx="0.8" cy="0.75" r="0.75" fill="#444"/><circle cx="0.8" cy="3.25" r="0.75" fill="#444"/><circle cx="0.8" cy="5.75" r="0.75" fill="#444"/></svg>
<div class="a" style="left:455px;top:72px;width:321px;height:13.6px;background:#cbcbcb"></div>
<div class="a" style="left:455px;top:84.8px;width:321px;height:0.8px;background:#b6b6b6"></div>
<div class="t" style="left:457.1px;top:73.8px;color:#2a2a2a">Game</div>
<svg style="left:506.3px;top:78px" width="4.6" height="2.4" viewBox="0 0 4.6 2.4"><path d="M0 0H4.6L2.3 2.4Z" fill="#555"/></svg>
<div class="a" style="left:513.6px;top:72px;width:1px;height:13px;background:#b0b0b0"></div><div class="a" style="left:514.6px;top:72px;width:0.8px;height:13px;background:#d6d6d6"></div>
<div class="a" style="left:569.9px;top:72px;width:1px;height:13px;background:#b0b0b0"></div><div class="a" style="left:570.9px;top:72px;width:0.8px;height:13px;background:#d6d6d6"></div>
<div class="a" style="left:676.1px;top:72px;width:1px;height:13px;background:#b0b0b0"></div><div class="a" style="left:677.1px;top:72px;width:0.8px;height:13px;background:#d6d6d6"></div>
<div class="a" style="left:754.8px;top:72px;width:1px;height:13px;background:#b0b0b0"></div><div class="a" style="left:755.8px;top:72px;width:0.8px;height:13px;background:#d6d6d6"></div>
<div class="t" style="left:521px;top:73.8px;color:#2a2a2a">Display 1</div>
<svg style="left:563.3px;top:78px" width="4.6" height="2.4" viewBox="0 0 4.6 2.4"><path d="M0 0H4.6L2.3 2.4Z" fill="#555"/></svg>
<div class="t" style="left:573.8px;top:73.8px;color:#2a2a2a">1920x1080</div>
<svg style="left:668.7px;top:78px" width="4.6" height="2.4" viewBox="0 0 4.6 2.4"><path d="M0 0H4.6L2.3 2.4Z" fill="#555"/></svg>
<div class="t" style="left:680.5px;top:73.8px;color:#2a2a2a">Scale</div>
<div class="a" style="left:707px;top:78.8px;width:16.7px;height:0.8px;background:#777"></div>
<div class="a" style="left:704.2px;top:76.1px;width:6.2px;height:6.2px;border-radius:50%;background:#6e6e6e"></div>
<div class="t" style="left:727.8px;top:73.8px;color:#2a2a2a">0.51x</div>
<div class="t" style="left:757.6px;top:73.8px;color:#2a2a2a">Play</div>
<div class="a" style="left:774.5px;top:74px;width:0.8px;height:10px;background:#b0b0b0"></div>
<div class="a" style="left:452.5px;top:85.6px;width:2.4px;height:301.5px;background:#c2c2c2"></div>
<div class="a" style="left:454.8px;top:85.6px;width:321.4px;height:301px;background:#303030"></div>
<div class="a" style="left:454.8px;top:146.4px;width:321.4px;height:180.8px;background:#384b74"></div>
<div class="t" style="left:454.3px;top:146.4px;font-size:15.2px;line-height:18px;color:#f2f2f2">Level : 1</div>
<div class="a" style="left:576.6px;top:224px;width:77.3px;height:25.8px;background:#f4f4f4"></div>
<div class="t" style="left:585.3px;top:227.5px;font-size:15px;line-height:17px;color:#323232">Level Up</div>
<!-- inspector -->
<div class="a" style="left:776.2px;top:57px;width:247.8px;height:15px;background:#dedede"></div>
<div class="a" style="left:777.5px;top:57px;width:61.3px;height:15px;background:#cdcdcd;border-radius:2.5px 2.5px 0 0"></div>
<div class="a" style="left:777.5px;top:57px;width:61.3px;height:1.3px;background:#5a8ad0;border-radius:2px 2px 0 0"></div>
<svg style="left:784.8px;top:62.3px" width="6.3" height="6.3" viewBox="0 0 6.3 6.3"><circle cx="3.15" cy="3.15" r="3.15" fill="#444"/><rect x="2.6" y="2.6" width="1.1" height="2.6" fill="#cdcdcd"/><circle cx="3.15" cy="1.6" r="0.6" fill="#cdcdcd"/></svg>
<div class="t" style="left:794.5px;top:60.6px;color:#2a2a2a">Inspector</div>
<svg style="left:1001.7px;top:60.8px" width="6" height="7" viewBox="0 0 6 7"><path d="M1.3 3.3V2Q1.3 0.5 2.9 0.5Q4.5 0.5 4.5 2V2.4" fill="none" stroke="#555" stroke-width="0.9"/><rect x="0.5" y="3.3" width="5" height="3.3" fill="none" stroke="#555" stroke-width="0.9"/></svg>
<svg style="left:1014.7px;top:61.3px" width="1.6" height="6.5" viewBox="0 0 1.6 6.5"><circle cx="0.8" cy="0.75" r="0.75" fill="#444"/><circle cx="0.8" cy="3.25" r="0.75" fill="#444"/><circle cx="0.8" cy="5.75" r="0.75" fill="#444"/></svg>
<div class="a" style="left:776.2px;top:72px;width:247.8px;height:486px;background:#c8c8c8"></div>
<div class="a" style="left:777.4px;top:72px;width:246.6px;height:38.6px;background:#cbcbcb"></div>
<svg style="left:782px;top:79.4px" width="13" height="13.6" viewBox="0 0 13 13.6"><path d="M6.5 0.6L12.3 3.4V10.2L6.5 13L0.7 10.2V3.4Z M0.7 3.4L6.5 6.2L12.3 3.4 M6.5 6.2V13" fill="none" stroke="#545454" stroke-width="0.95" stroke-linejoin="round"/></svg>
<svg style="left:795px;top:92.8px" width="4.4" height="2.6" viewBox="0 0 4.4 2.6"><path d="M0 0H4.4L2.2 2.6Z" fill="#555"/></svg>
<div class="a" style="left:808.6px;top:79.5px;width:8.3px;height:8.6px;background:#f3f3f3;border-radius:1px;box-shadow:0 0 0 0.5px #c4c4c4"></div><svg style="left:808.6px;top:79.5px" width="8.3" height="8.6" viewBox="0 0 8 8.3"><path d="M1.7 4.2L3.3 5.9L6.4 2.3" fill="none" stroke="#2e2e2e" stroke-width="1.1"/></svg>
<div class="a" style="left:821.8px;top:78.9px;width:150px;height:10.7px;background:#f0f0f0;border-radius:2px;box-shadow:0 0 0 0.5px #c6c6c6"></div>
<div class="t b" style="left:823.8px;top:80.2px;color:#1a1a1a">Canvas</div>
<div class="a" style="left:974.6px;top:79.4px;width:8.4px;height:8.7px;background:#efefef;border-radius:1px;box-shadow:0 0 0 0.5px #c6c6c6"></div>
<div class="t" style="left:986.5px;top:79.8px;color:#2a2a2a">Static</div>
<svg style="left:1016px;top:82.5px" width="4.8" height="2.8" viewBox="0 0 4.8 2.8"><path d="M0 0H4.8L2.4 2.8Z" fill="#555"/></svg>
<div class="t" style="left:804.2px;top:95.6px;color:#3a3a3a">Tag</div>
<div class="a" style="left:820.8px;top:95px;width:86.9px;height:10.2px;background:#e2e2e2;border-radius:2px;box-shadow:0 0.5px 0 0.3px #b8b8b8"></div>
<div class="t" style="left:822.6px;top:95.6px;color:#333">Untagged</div>
<svg style="left:900.2px;top:98.9px" width="4.8" height="2.8" viewBox="0 0 4.8 2.8"><path d="M0 0H4.8L2.4 2.8Z" fill="#555"/></svg>
<div class="t" style="left:917px;top:95.6px;color:#3a3a3a">Layer</div>
<div class="a" style="left:942.2px;top:95px;width:78.9px;height:10.2px;background:#e2e2e2;border-radius:2px;box-shadow:0 0.5px 0 0.3px #b8b8b8"></div>
<div class="t" style="left:944.5px;top:95.6px;color:#333">UI</div>
<svg style="left:1012.8px;top:98.9px" width="4.8" height="2.8" viewBox="0 0 4.8 2.8"><path d="M0 0H4.8L2.4 2.8Z" fill="#555"/></svg>
<div class="a" style="left:777.4px;top:110.6px;width:246.6px;height:1px;background:#a9a9a9"></div>
<div class="a" style="left:777.4px;top:111.6px;width:246.6px;height:14.3px;background:#cdcdcd"></div>
<svg style="left:781.9px;top:116.05px" width="5.2" height="5.2" viewBox="0 0 5.2 5.2"><path d="M0 0V5.2L5.2 2.6Z" fill="#7f7f7f"/></svg>
<svg style="left:791.3px;top:114.55px" width="9.2" height="8.6" viewBox="0 0 9.2 8.6"><path d="M0.5 0.5L2.8 2.8M2.8 0.8V2.8H0.8 M8.5 0.5L6.2 2.8M6.2 0.8V2.8H8.2 M0.5 7.5L2.8 5.2M2.8 7.2V5.2H0.8 M8.5 7.5L6.2 5.2M6.2 7.2V5.2H8.2" fill="none" stroke="#555" stroke-width="1"/></svg>
<div class="t b" style="left:817.2px;top:114.35px;color:#1a1a1a">Rect Transform</div>
<svg style="left:986.7px;top:115.25px" width="6.8" height="6.8" viewBox="0 0 6.8 6.8"><circle cx="3.4" cy="3.4" r="3.4" fill="#444"/><path d="M2.3 2.6Q2.3 1.4 3.4 1.4Q4.5 1.4 4.5 2.4Q4.5 3.1 3.7 3.5V4.1" fill="none" stroke="#cdcdcd" stroke-width="0.85"/><circle cx="3.5" cy="5.2" r="0.5" fill="#cdcdcd"/></svg>
<svg style="left:999.5px;top:115.15px" width="6.8" height="7" viewBox="0 0 6.8 7"><path d="M0 2H6.8M0 5H6.8" stroke="#444" stroke-width="0.8"/><path d="M4.5 0.3V3.3M2.3 3.7V6.7" stroke="#444" stroke-width="1.1"/></svg>
<svg style="left:1015.4px;top:115.5px" width="1.6" height="6.5" viewBox="0 0 1.6 6.5"><circle cx="0.8" cy="0.75" r="0.75" fill="#444"/><circle cx="0.8" cy="3.25" r="0.75" fill="#444"/><circle cx="0.8" cy="5.75" r="0.75" fill="#444"/></svg>
<div class="a" style="left:777.4px;top:125.9px;width:246.6px;height:1px;background:#a9a9a9"></div>
<div class="a" style="left:777.4px;top:126.9px;width:246.6px;height:13.4px;background:#cdcdcd"></div>
<svg style="left:781.9px;top:130.9px" width="5.2" height="5.2" viewBox="0 0 5.2 5.2"><path d="M0 0V5.2L5.2 2.6Z" fill="#7f7f7f"/></svg>
<svg style="left:791.3px;top:129.4px" width="9.2" height="8.6" viewBox="0 0 9.2 8.6"><rect x="1" y="1" width="7.2" height="6" fill="none" stroke="#555" stroke-width="0.9"/><rect x="2.3" y="2.2" width="4.6" height="3.6" fill="#555"/><rect x="0" y="0" width="1.8" height="1.8" fill="#555"/><rect x="7.4" y="0" width="1.8" height="1.8" fill="#555"/><rect x="0" y="6.2" width="1.8" height="1.8" fill="#555"/><rect x="7.4" y="6.2" width="1.8" height="1.8" fill="#555"/></svg>
<div class="a" style="left:804.3px;top:129.4px;width:7.9px;height:8.2px;background:#f3f3f3;border-radius:1px;box-shadow:0 0 0 0.5px #c4c4c4"></div><svg style="left:804.3px;top:129.4px" width="7.9" height="8.2" viewBox="0 0 8 8.3"><path d="M1.7 4.2L3.3 5.9L6.4 2.3" fill="none" stroke="#2e2e2e" stroke-width="1.1"/></svg>
<div class="t b" style="left:817.2px;top:129.2px;color:#1a1a1a">Canvas</div>
<svg style="left:986.7px;top:130.1px" width="6.8" height="6.8" viewBox="0 0 6.8 6.8"><circle cx="3.4" cy="3.4" r="3.4" fill="#444"/><path d="M2.3 2.6Q2.3 1.4 3.4 1.4Q4.5 1.4 4.5 2.4Q4.5 3.1 3.7 3.5V4.1" fill="none" stroke="#cdcdcd" stroke-width="0.85"/><circle cx="3.5" cy="5.2" r="0.5" fill="#cdcdcd"/></svg>
<svg style="left:999.5px;top:130.0px" width="6.8" height="7" viewBox="0 0 6.8 7"><path d="M0 2H6.8M0 5H6.8" stroke="#444" stroke-width="0.8"/><path d="M4.5 0.3V3.3M2.3 3.7V6.7" stroke="#444" stroke-width="1.1"/></svg>
<svg style="left:1015.4px;top:130.35px" width="1.6" height="6.5" viewBox="0 0 1.6 6.5"><circle cx="0.8" cy="0.75" r="0.75" fill="#444"/><circle cx="0.8" cy="3.25" r="0.75" fill="#444"/><circle cx="0.8" cy="5.75" r="0.75" fill="#444"/></svg>
<div class="a" style="left:777.4px;top:140.3px;width:246.6px;height:1px;background:#a9a9a9"></div>
<div class="a" style="left:777.4px;top:141.3px;width:246.6px;height:13.5px;background:#cdcdcd"></div>
<svg style="left:781.9px;top:145.35px" width="5.2" height="5.2" viewBox="0 0 5.2 5.2"><path d="M0 0V5.2L5.2 2.6Z" fill="#7f7f7f"/></svg>
<svg style="left:791.3px;top:143.85px" width="9.2" height="8.6" viewBox="0 0 9.2 8.6"><rect x="0.5" y="0.5" width="8.2" height="7.2" rx="1" fill="none" stroke="#555" stroke-width="0.9"/><rect x="3.2" y="2" width="4" height="4.2" fill="#555"/><rect x="1.6" y="3.6" width="1.8" height="2.6" fill="#e8e8e8"/></svg>
<div class="a" style="left:804.3px;top:143.85px;width:7.9px;height:8.2px;background:#f3f3f3;border-radius:1px;box-shadow:0 0 0 0.5px #c4c4c4"></div><svg style="left:804.3px;top:143.85px" width="7.9" height="8.2" viewBox="0 0 8 8.3"><path d="M1.7 4.2L3.3 5.9L6.4 2.3" fill="none" stroke="#2e2e2e" stroke-width="1.1"/></svg>
<div class="t b" style="left:817.2px;top:143.65px;color:#1a1a1a">Canvas Scaler</div>
<svg style="left:986.7px;top:144.55px" width="6.8" height="6.8" viewBox="0 0 6.8 6.8"><circle cx="3.4" cy="3.4" r="3.4" fill="#444"/><path d="M2.3 2.6Q2.3 1.4 3.4 1.4Q4.5 1.4 4.5 2.4Q4.5 3.1 3.7 3.5V4.1" fill="none" stroke="#cdcdcd" stroke-width="0.85"/><circle cx="3.5" cy="5.2" r="0.5" fill="#cdcdcd"/></svg>
<svg style="left:999.5px;top:144.45px" width="6.8" height="7" viewBox="0 0 6.8 7"><path d="M0 2H6.8M0 5H6.8" stroke="#444" stroke-width="0.8"/><path d="M4.5 0.3V3.3M2.3 3.7V6.7" stroke="#444" stroke-width="1.1"/></svg>
<svg style="left:1015.4px;top:144.8px" width="1.6" height="6.5" viewBox="0 0 1.6 6.5"><circle cx="0.8" cy="0.75" r="0.75" fill="#444"/><circle cx="0.8" cy="3.25" r="0.75" fill="#444"/><circle cx="0.8" cy="5.75" r="0.75" fill="#444"/></svg>
<div class="a" style="left:777.4px;top:154.8px;width:246.6px;height:1px;background:#a9a9a9"></div>
<div class="a" style="left:777.4px;top:155.8px;width:246.6px;height:13.5px;background:#cdcdcd"></div>
<svg style="left:781.9px;top:159.85px" width="5.2" height="5.2" viewBox="0 0 5.2 5.2"><path d="M0 0V5.2L5.2 2.6Z" fill="#7f7f7f"/></svg>
<svg style="left:791.3px;top:158.35px" width="9.2" height="8.6" viewBox="0 0 9.2 8.6"><rect x="1.6" y="1.6" width="6" height="5" fill="none" stroke="#555" stroke-width="0.9"/><path d="M0 0.3L1.6 1.6M9.2 7.7L7.6 6.6" stroke="#3a78d0" stroke-width="0.9"/></svg>
<div class="a" style="left:804.3px;top:158.35px;width:7.9px;height:8.2px;background:#f3f3f3;border-radius:1px;box-shadow:0 0 0 0.5px #c4c4c4"></div><svg style="left:804.3px;top:158.35px" width="7.9" height="8.2" viewBox="0 0 8 8.3"><path d="M1.7 4.2L3.3 5.9L6.4 2.3" fill="none" stroke="#2e2e2e" stroke-width="1.1"/></svg>
<div class="t b" style="left:817.2px;top:158.15px;color:#1a1a1a">Graphic Raycaster</div>
<svg style="left:986.7px;top:159.05px" width="6.8" height="6.8" viewBox="0 0 6.8 6.8"><circle cx="3.4" cy="3.4" r="3.4" fill="#444"/><path d="M2.3 2.6Q2.3 1.4 3.4 1.4Q4.5 1.4 4.5 2.4Q4.5 3.1 3.7 3.5V4.1" fill="none" stroke="#cdcdcd" stroke-width="0.85"/><circle cx="3.5" cy="5.2" r="0.5" fill="#cdcdcd"/></svg>
<svg style="left:999.5px;top:158.95px" width="6.8" height="7" viewBox="0 0 6.8 7"><path d="M0 2H6.8M0 5H6.8" stroke="#444" stroke-width="0.8"/><path d="M4.5 0.3V3.3M2.3 3.7V6.7" stroke="#444" stroke-width="1.1"/></svg>
<svg style="left:1015.4px;top:159.3px" width="1.6" height="6.5" viewBox="0 0 1.6 6.5"><circle cx="0.8" cy="0.75" r="0.75" fill="#444"/><circle cx="0.8" cy="3.25" r="0.75" fill="#444"/><circle cx="0.8" cy="5.75" r="0.75" fill="#444"/></svg>
<div class="a" style="left:777.4px;top:169.3px;width:246.6px;height:1px;background:#a9a9a9"></div>
<div class="a" style="left:777.4px;top:170.3px;width:246.6px;height:13.3px;background:#cdcdcd"></div>
<svg style="left:781.3px;top:174.55px" width="5.9" height="4.7" viewBox="0 0 5.9 4.7"><path d="M0 0H5.9L2.95 4.7Z" fill="#7f7f7f"/></svg>
<svg style="left:791.3px;top:172.75px" width="9.2" height="8.6" viewBox="0 0 9.2 8.6"><path d="M0.5 0.3H5.8L7.8 2.3V8.6H0.5Z" fill="#fafafa"/><path d="M3.3 1.6L2.9 7.4M5.2 1.6L4.8 7.4M1.6 3.5H6.6M1.5 5.5H6.4" stroke="#3a8a3a" stroke-width="1"/></svg>
<div class="a" style="left:804.3px;top:172.75px;width:7.9px;height:8.2px;background:#f3f3f3;border-radius:1px;box-shadow:0 0 0 0.5px #c4c4c4"></div><svg style="left:804.3px;top:172.75px" width="7.9" height="8.2" viewBox="0 0 8 8.3"><path d="M1.7 4.2L3.3 5.9L6.4 2.3" fill="none" stroke="#2e2e2e" stroke-width="1.1"/></svg>
<div class="t b" style="left:817.2px;top:172.55px;color:#1a1a1a">Level UI (Script)</div>
<svg style="left:986.7px;top:173.45px" width="6.8" height="6.8" viewBox="0 0 6.8 6.8"><circle cx="3.4" cy="3.4" r="3.4" fill="#444"/><path d="M2.3 2.6Q2.3 1.4 3.4 1.4Q4.5 1.4 4.5 2.4Q4.5 3.1 3.7 3.5V4.1" fill="none" stroke="#cdcdcd" stroke-width="0.85"/><circle cx="3.5" cy="5.2" r="0.5" fill="#cdcdcd"/></svg>
<svg style="left:999.5px;top:173.35px" width="6.8" height="7" viewBox="0 0 6.8 7"><path d="M0 2H6.8M0 5H6.8" stroke="#444" stroke-width="0.8"/><path d="M4.5 0.3V3.3M2.3 3.7V6.7" stroke="#444" stroke-width="1.1"/></svg>
<svg style="left:1015.4px;top:173.7px" width="1.6" height="6.5" viewBox="0 0 1.6 6.5"><circle cx="0.8" cy="0.75" r="0.75" fill="#444"/><circle cx="0.8" cy="3.25" r="0.75" fill="#444"/><circle cx="0.8" cy="5.75" r="0.75" fill="#444"/></svg>
<div class="a" style="left:777.4px;top:183.6px;width:246.6px;height:0.8px;background:#bdbdbd"></div>
<div class="t" style="left:790.1px;top:187.2px;color:#9c9c9c">Script</div>
<div class="a" style="left:876.2px;top:187px;width:145px;height:10.2px;background:#d3d3d3;border-radius:2px"></div>
<svg style="left:878.4px;top:188.5px" width="5.5" height="7" viewBox="0 0 5.5 7"><rect x="0" y="0" width="5.5" height="7" fill="#e6e6e6"/><path d="M2 1.2V5.8M3.6 1.2V5.8M1 2.6H4.6M1 4.3H4.6" stroke="#8cb08c" stroke-width="0.6"/></svg>
<div class="t" style="left:886.3px;top:187.2px;color:#9c9c9c">LevelUI</div>
<svg style="left:1011.5px;top:188.6px" width="7" height="7" viewBox="0 0 7 7"><circle cx="3.5" cy="3.5" r="3" fill="none" stroke="#aaa" stroke-width="0.7"/><circle cx="3.5" cy="3.5" r="1" fill="#aaa"/></svg>
<svg style="left:790.3px;top:208.6px" width="28.2" height="7" viewBox="0 0 28.2 7"><g fill="none" stroke="#262626" stroke-width="0.95">
<path d="M2.6 0.4L1.6 1.6H4.6M3.8 0.9L4.4 1.5M0.5 2.6H6M3.2 1.7Q2.6 3.8 0.4 4.2M3.4 2.8L6 4.1M2 4.6L4.6 4M1.6 5.6L5 4.9M1.2 6.6L6 5.8"/>
<path d="M7.4 0.6H9.4V3.2H7.4ZM7.4 1.9H9.4M10 0.6H12.8L12.4 1.6M10.4 1.8H12.6V3.2H10.4ZM7.6 4.6L7.2 6.3M9 4.8L9.2 6.3M10.6 4.8L10.9 6.3M12.2 4.6L12.9 6.3"/>
<path d="M14.4 0.6H16.6M14 1.6H17M14.4 2.6H16.6M14.4 3.6H16.6M14.5 4.6H16.5V6.5H14.5ZM17.8 0.6V2Q17.8 2.8 17.4 3.2M17.8 0.6H19.4V2.6H20.4M17.6 3.6H20.2Q19.6 5.4 17.4 6.5M18 4.4Q19 5.8 20.6 6.4"/>
<path d="M24.4 0.2V1M21.6 2.2V1.2H27.2V2.2M22.4 2.9H26.4M24.4 2.9V5.8M24.6 4.3H26.4M23 3.8Q23 5.6 21.6 6.4M23 5.3Q24.4 6.4 27.4 6.4"/>
</g></svg>
<div class="t" style="left:790.1px;top:218.8px;color:#2a2a2a">Player Status</div>
<div class="a" style="left:876.2px;top:217.6px;width:145px;height:10.9px;background:#e8e8e8;border-radius:2px"></div>
<div class="a" style="left:1009.8px;top:217.6px;width:11.4px;height:10.9px;background:#dbdbdb;border-radius:0 2px 2px 0"></div>
<svg style="left:878.4px;top:219.3px" width="5.5" height="7.3" viewBox="0 0 5.5 7.3"><rect x="0" y="0" width="5.5" height="7.3" fill="#fafafa"/><path d="M2.2 1L1.9 6.3M3.8 1L3.5 6.3M0.7 2.7H5M0.6 4.5H4.9" stroke="#3a8a3a" stroke-width="0.85"/></svg>
<div class="t" style="left:886.3px;top:218.8px;color:#2a2a2a;letter-spacing:0.15px">Player (Status)</div>
<svg style="left:1011.8px;top:219.5px" width="7.2" height="7.2" viewBox="0 0 7.2 7.2"><circle cx="3.6" cy="3.6" r="3.1" fill="none" stroke="#555" stroke-width="0.75"/><circle cx="3.6" cy="3.6" r="1.1" fill="#555"/></svg>
<div class="t" style="left:790.1px;top:232.3px;color:#2a2a2a">Level Text</div>
<div class="a" style="left:876.2px;top:231.7px;width:145px;height:10.5px;background:#e8e8e8;border-radius:2px"></div>
<div class="a" style="left:1009.8px;top:231.7px;width:11.4px;height:10.5px;background:#dbdbdb;border-radius:0 2px 2px 0"></div>
<div class="a" style="left:877.6px;top:232.4px;width:7.8px;height:8.8px;background:#d3e6fa;border-radius:1px;box-shadow:0 0 0 0.5px #9cc4ee"></div>
<div class="t b" style="left:878.9px;top:232.2px;color:#3a86d6;font-size:8.6px;letter-spacing:0">T</div>
<div class="t" style="left:886.3px;top:232.3px;color:#2a2a2a">LevelText (Text Mesh Pro UGUI)</div>
<svg style="left:1011.8px;top:233.3px" width="7.2" height="7.2" viewBox="0 0 7.2 7.2"><circle cx="3.6" cy="3.6" r="3.1" fill="none" stroke="#555" stroke-width="0.75"/><circle cx="3.6" cy="3.6" r="1.1" fill="#555"/></svg>
<div class="a" style="left:777.4px;top:247.6px;width:246.6px;height:1.2px;background:#ababab"></div>
<div class="a" style="left:825.8px;top:254.4px;width:150.4px;height:13.6px;background:#e2e2e2;border-radius:2px;box-shadow:0 0.6px 0 0.3px #b3b3b3"></div>
<div class="t" style="left:872.2px;top:257.2px;color:#2a2a2a">Add Component</div>
<div class="a" style="left:776.2px;top:72px;width:2px;height:315px;background:#d2d4d6"></div>
<!-- bottom: project -->
<div class="a" style="left:0;top:387px;width:777px;height:2px;background:#dedede"></div>
<div class="a" style="left:0;top:389px;width:517px;height:15px;background:#dedede"></div>
<div class="a" style="left:0;top:389px;width:50.6px;height:15px;background:#cdcdcd;border-radius:0 3px 0 0"></div>
<svg style="left:4.8px;top:393.2px" width="8.2" height="6.6" viewBox="0 0 8.4 6.4"><path d="M0 0.3Q0 0 0.3 0H3L3.8 0.9H8.1Q8.4 0.9 8.4 1.2V6.1Q8.4 6.4 8.1 6.4H0.3Q0 6.4 0 6.1Z" fill="#4e4e4e"/><rect x="0" y="1.6" width="8.4" height="0.5" fill="#8a8a8a" opacity="0.5"/></svg>
<div class="t" style="left:15.7px;top:392.5px;color:#2a2a2a">Project</div>
<svg style="left:495.6px;top:393px" width="7" height="7" viewBox="0 0 7 7"><path d="M1.5 3.3V2Q1.5 0.5 3.3 0.5Q5 0.5 5 2" fill="none" stroke="#555" stroke-width="0.9"/><rect x="0.9" y="3.3" width="5.2" height="3.4" fill="none" stroke="#555" stroke-width="0.9"/></svg>
<svg style="left:507px;top:393.3px" width="1.6" height="6.5" viewBox="0 0 1.6 6.5"><circle cx="0.8" cy="0.75" r="0.75" fill="#444"/><circle cx="0.8" cy="3.25" r="0.75" fill="#444"/><circle cx="0.8" cy="5.75" r="0.75" fill="#444"/></svg>
<div class="a" style="left:0;top:404px;width:517px;height:14px;background:#cbcbcb"></div>
<div class="a" style="left:0;top:417.2px;width:517px;height:0.8px;background:#b3b3b3"></div>
<svg style="left:4.2px;top:407.8px" width="8.2" height="7.4" viewBox="0 0 8.2 7.4"><path d="M0 3H6M3 0V6" stroke="#444" stroke-width="1.1"/><rect x="6.3" y="6" width="1.8" height="1.2" fill="#444"/></svg>
<div class="a" style="left:16px;top:404px;width:0.8px;height:13.5px;background:#b5b5b5"></div>
<div class="a" style="left:210.5px;top:406.9px;width:197px;height:8.8px;background:#f0f0f0;border-radius:2.5px;box-shadow:0 0 0 0.5px #c4c4c4"></div>
<svg style="left:214px;top:408.5px" width="5" height="5.5" viewBox="0 0 5 5.5"><circle cx="2" cy="2" r="1.5" fill="none" stroke="#888" stroke-width="0.8"/><path d="M3.1 3.1L4.6 4.9" stroke="#888" stroke-width="0.9"/></svg>
<div class="a" style="left:407px;top:406.5px;width:11.8px;height:9.6px;background:#d6d6d6;border-radius:0 2px 2px 0;box-shadow:0 0 0 0.5px #bcbcbc"></div>
<svg style="left:408.8px;top:407.5px" width="8" height="8" viewBox="0 0 8 8"><rect x="3" y="0.8" width="4.2" height="4.2" fill="none" stroke="#555" stroke-width="0.8"/><rect x="0.8" y="4.2" width="2.6" height="2.6" fill="none" stroke="#555" stroke-width="0.8"/><path d="M4 4L6.3 1.7" stroke="#555" stroke-width="0.8"/></svg>
<div class="a" style="left:420.40000000000003px;top:404.5px;width:0.8px;height:13px;background:#b9b9b9"></div>
<div class="a" style="left:437.70000000000005px;top:404.5px;width:0.8px;height:13px;background:#b9b9b9"></div>
<div class="a" style="left:454.70000000000005px;top:404.5px;width:0.8px;height:13px;background:#b9b9b9"></div>
<div class="a" style="left:472.20000000000005px;top:404.5px;width:0.8px;height:13px;background:#b9b9b9"></div>
<div class="a" style="left:489.20000000000005px;top:404.5px;width:0.8px;height:13px;background:#b9b9b9"></div>
<svg style="left:425.4px;top:406.5px" width="8" height="8.5" viewBox="0 0 8 8.5"><rect x="1" y="0" width="3.6" height="3.2" fill="#444"/><circle cx="2.6" cy="6.2" r="2.3" fill="#444"/><path d="M5.2 3.6L8 7.2H4.5Z" fill="#444"/></svg>
<svg style="left:443px;top:407px" width="7" height="7" viewBox="0 0 7 7"><path d="M3.8 0.3H6.7V3.2L3 6.9L0.1 4Z" fill="#444"/><circle cx="5.2" cy="1.8" r="0.7" fill="#cbcbcb"/></svg>
<div class="a" style="left:459.3px;top:406.6px;width:8.5px;height:8.5px;border-radius:50%;background:#c3c3c3"></div>
<svg style="left:476.9px;top:407.2px" width="7.4" height="7" viewBox="0 0 7.4 7"><path d="M3.7 0L4.6 2.6H7.4L5.1 4.3L6 7L3.7 5.3L1.4 7L2.3 4.3L0 2.6H2.8Z" fill="#8a8a8a"/></svg>
<svg style="left:493.2px;top:408.2px" width="9.2" height="5" viewBox="0 0 9.2 5"><path d="M0.3 2.5Q4.6 -1.6 8.9 2.5Q4.6 6.6 0.3 2.5Z" fill="none" stroke="#a8a8a8" stroke-width="0.8"/><circle cx="4.6" cy="2.5" r="1.3" fill="#a8a8a8"/></svg>
<div class="t" style="left:503.6px;top:405.6px;color:#2a2a2a;font-size:8.4px">29</div>
<div class="a" style="left:0;top:418px;width:135px;height:140px;background:#c8c8c8"></div>
<div class="a" style="left:135.2px;top:418px;width:0.8px;height:140px;background:#a9a9a9"></div>
<div class="a" style="left:0;top:470.6px;width:135.2px;height:10.2px;background:#b3b3b3"></div>
<svg style="left:2px;top:421.4px" width="5" height="4.6" viewBox="0 0 5 4.6"><path d="M0 0H5L2.5 4.6Z" fill="#8a8a8a"/></svg>
<svg style="left:11px;top:419.8px" width="7.4" height="7" viewBox="0 0 7.4 7"><path d="M3.7 0L4.6 2.6H7.4L5.1 4.3L6 7L3.7 5.3L1.4 7L2.3 4.3L0 2.6H2.8Z" fill="#4a4a4a"/></svg>
<div class="t b" style="left:22.3px;top:419.2px;color:#1a1a1a">Favorites</div>
<svg style="left:19.8px;top:431.2px" width="7.8" height="6.8" viewBox="0 0 7.8 6.8"><circle cx="2.9" cy="2.9" r="2.4" fill="none" stroke="#555" stroke-width="0.8"/><path d="M4.6 4.6L7.2 6.6" stroke="#555" stroke-width="0.9"/></svg>
<div class="t" style="left:30.8px;top:430.1px">All Materials</div>
<svg style="left:19.8px;top:441.6px" width="7.8" height="6.8" viewBox="0 0 7.8 6.8"><circle cx="2.9" cy="2.9" r="2.4" fill="none" stroke="#555" stroke-width="0.8"/><path d="M4.6 4.6L7.2 6.6" stroke="#555" stroke-width="0.9"/></svg>
<div class="t" style="left:30.8px;top:440.5px">All Models</div>
<svg style="left:19.8px;top:452.0px" width="7.8" height="6.8" viewBox="0 0 7.8 6.8"><circle cx="2.9" cy="2.9" r="2.4" fill="none" stroke="#555" stroke-width="0.8"/><path d="M4.6 4.6L7.2 6.6" stroke="#555" stroke-width="0.9"/></svg>
<div class="t" style="left:30.8px;top:450.9px">All Prefabs</div>
<svg style="left:2px;top:473.6px" width="5" height="4.6" viewBox="0 0 5 4.6"><path d="M0 0H5L2.5 4.6Z" fill="#7a7a7a"/></svg>
<svg style="left:10.4px;top:472.3px" width="9.2" height="6.8" viewBox="0 0 9.2 6.8"><path d="M0 0.3Q0 0 0.3 0H3L3.8 0.9H7.6Q7.9 0.9 7.9 1.2V2.3H2.2L0 6.8Z" fill="#4e4e4e"/><path d="M2.4 2.8H9.2L7 6.8H0.2Z" fill="#4e4e4e"/></svg>
<div class="t b" style="left:22.2px;top:471.5px;color:#1a1a1a">Assets</div>
<svg style="left:19.6px;top:483.3px" width="8.4" height="6.4" viewBox="0 0 8.4 6.4"><path d="M0 0.3Q0 0 0.3 0H3L3.8 0.9H8.1Q8.4 0.9 8.4 1.2V6.1Q8.4 6.4 8.1 6.4H0.3Q0 6.4 0 6.1Z" fill="#545454"/><rect x="0" y="1.6" width="8.4" height="0.5" fill="#8a8a8a" opacity="0.5"/></svg>
<div class="t" style="left:30.5px;top:482.2px">Scenes</div>
<svg style="left:11px;top:494.4px" width="4.6" height="5.2" viewBox="0 0 4.6 5.2"><path d="M0 0V5.2L4.6 2.6Z" fill="#7a7a7a"/></svg>
<svg style="left:19.6px;top:493.8px" width="8.4" height="6.4" viewBox="0 0 8.4 6.4"><path d="M0 0.3Q0 0 0.3 0H3L3.8 0.9H8.1Q8.4 0.9 8.4 1.2V6.1Q8.4 6.4 8.1 6.4H0.3Q0 6.4 0 6.1Z" fill="#545454"/><rect x="0" y="1.6" width="8.4" height="0.5" fill="#8a8a8a" opacity="0.5"/></svg>
<div class="t" style="left:30.5px;top:492.7px">Settings</div>
<svg style="left:11px;top:504.8px" width="4.6" height="5.2" viewBox="0 0 4.6 5.2"><path d="M0 0V5.2L4.6 2.6Z" fill="#7a7a7a"/></svg>
<svg style="left:19.6px;top:504.2px" width="8.4" height="6.4" viewBox="0 0 8.4 6.4"><path d="M0 0.3Q0 0 0.3 0H3L3.8 0.9H8.1Q8.4 0.9 8.4 1.2V6.1Q8.4 6.4 8.1 6.4H0.3Q0 6.4 0 6.1Z" fill="#545454"/><rect x="0" y="1.6" width="8.4" height="0.5" fill="#8a8a8a" opacity="0.5"/></svg>
<div class="t" style="left:30.5px;top:503.1px">TextMesh Pro</div>
<svg style="left:2px;top:515.3px" width="4.6" height="5.2" viewBox="0 0 4.6 5.2"><path d="M0 0V5.2L4.6 2.6Z" fill="#7a7a7a"/></svg>
<svg style="left:10.4px;top:514.7px" width="8.4" height="6.4" viewBox="0 0 8.4 6.4"><path d="M0 0.3Q0 0 0.3 0H3L3.8 0.9H8.1Q8.4 0.9 8.4 1.2V6.1Q8.4 6.4 8.1 6.4H0.3Q0 6.4 0 6.1Z" fill="#4e4e4e"/><rect x="0" y="1.6" width="8.4" height="0.5" fill="#8a8a8a" opacity="0.5"/></svg>
<div class="t b" style="left:22.2px;top:513.6px;color:#1a1a1a">Packages</div>
<div class="a" style="left:136px;top:418px;width:380.8px;height:13.3px;background:#cdcdcd"></div>
<div class="t b" style="left:138.6px;top:419.8px;color:#1a1a1a">Assets</div>
<div class="a" style="left:136px;top:431.3px;width:380.8px;height:114.5px;background:#bebebe"></div>
<div class="a" style="left:136px;top:545.8px;width:380.8px;height:12.7px;background:#cbcbcb"></div>
<div class="a" style="left:473px;top:551.4px;width:32.8px;height:1.1px;background:#8a8a8a"></div>
<div class="a" style="left:469.6px;top:548.6px;width:6.6px;height:6.6px;border-radius:50%;background:#555"></div>
<svg style="left:147.7px;top:434.4px" width="8.4" height="6.4" viewBox="0 0 8.4 6.4"><path d="M0 0.3Q0 0 0.3 0H3L3.8 0.9H8.1Q8.4 0.9 8.4 1.2V6.1Q8.4 6.4 8.1 6.4H0.3Q0 6.4 0 6.1Z" fill="#545454"/><rect x="0" y="1.6" width="8.4" height="0.5" fill="#8a8a8a" opacity="0.5"/></svg>
<div class="t" style="left:158.6px;top:433.3px">Scenes</div>
<svg style="left:147.7px;top:444.9px" width="8.4" height="6.4" viewBox="0 0 8.4 6.4"><path d="M0 0.3Q0 0 0.3 0H3L3.8 0.9H8.1Q8.4 0.9 8.4 1.2V6.1Q8.4 6.4 8.1 6.4H0.3Q0 6.4 0 6.1Z" fill="#545454"/><rect x="0" y="1.6" width="8.4" height="0.5" fill="#8a8a8a" opacity="0.5"/></svg>
<div class="t" style="left:158.6px;top:443.8px">Settings</div>
<svg style="left:147.7px;top:455.4px" width="8.4" height="6.4" viewBox="0 0 8.4 6.4"><path d="M0 0.3Q0 0 0.3 0H3L3.8 0.9H8.1Q8.4 0.9 8.4 1.2V6.1Q8.4 6.4 8.1 6.4H0.3Q0 6.4 0 6.1Z" fill="#545454"/><rect x="0" y="1.6" width="8.4" height="0.5" fill="#8a8a8a" opacity="0.5"/></svg>
<div class="t" style="left:158.6px;top:454.3px">TextMesh Pro</div>
<svg style="left:147.5px;top:464.9px" width="8" height="8.4" viewBox="0 0 8 8.4"><path d="M0 0H5.8L8 2.2V8.4H0Z" fill="#fafafa"/><circle cx="4" cy="4.3" r="2.6" fill="none" stroke="#4b6a9a" stroke-width="0.9"/><circle cx="4" cy="4.3" r="1.2" fill="#3a6bb0"/><path d="M4 0.8V2M4 6.6V7.8M0.6 4.3H1.6M6.4 4.3H7.4" stroke="#555" stroke-width="0.7"/></svg>
<div class="t" style="left:158.6px;top:464.8px">DefaultVolumeProfile</div>
<svg style="left:137px;top:477.0px" width="4.6" height="5.2" viewBox="0 0 4.6 5.2"><path d="M0 0V5.2L4.6 2.6Z" fill="#7a7a7a"/></svg>
<svg style="left:147.5px;top:475.4px" width="8" height="8.4" viewBox="0 0 8 8.4"><path d="M0 0H4.5V8.4H0Z" fill="#f4f4f4"/><path d="M4.8 0.2V8.2" stroke="#aaa" stroke-width="0.6"/><path d="M6.8 1.5L5.2 4.4H6.6L5.6 7.4L7.8 4H6.4L7.4 1.5Z" fill="#3a8ed8"/></svg>
<div class="t" style="left:158.6px;top:475.3px">InputSystem_Actions</div>
<svg style="left:148.5px;top:486.1px" width="6.4" height="8" viewBox="0 0 6.4 8"><path d="M0 0H4.6L6.4 1.8V8H0Z" fill="#fafafa"/><path d="M2.6 1.3L2.2 6.9M4.4 1.3L4 6.9M0.9 3.1H5.7M0.8 5.1H5.5" stroke="#3a8a3a" stroke-width="1"/></svg>
<div class="t" style="left:158.6px;top:485.8px">LevelUI</div>
<svg style="left:148.5px;top:496.6px" width="6.4" height="8" viewBox="0 0 6.4 8"><path d="M0 0H4.6L6.4 1.8V8H0Z" fill="#fafafa"/><path d="M2.6 1.3L2.2 6.9M4.4 1.3L4 6.9M0.9 3.1H5.7M0.8 5.1H5.5" stroke="#3a8a3a" stroke-width="1"/></svg>
<div class="t" style="left:158.6px;top:496.3px">Status</div>
<svg style="left:147.5px;top:506.9px" width="8.6" height="8.6" viewBox="0 0 8.6 8.6"><path d="M0 0H5.6L7.4 1.8V8.4H0Z" fill="#fafafa"/><circle cx="3.8" cy="4.2" r="2.7" fill="#2f5fa8"/><circle cx="3.2" cy="3.5" r="1" fill="#9ec2ee"/><circle cx="6.4" cy="6.6" r="2" fill="#fafafa" stroke="#555" stroke-width="0.7"/><circle cx="6.4" cy="6.6" r="0.7" fill="#555"/></svg>
<div class="t" style="left:158.6px;top:506.8px">UniversalRenderPipelineGlobalSettings</div>
<div class="a" style="left:516.8px;top:387px;width:261px;height:171px;background:#dadada"></div>
<div class="a" style="left:517.8px;top:389px;width:56px;height:15px;background:#cdcdcd;border-radius:3px 3px 0 0"></div>
<svg style="left:524.9px;top:393.1px" width="6.8" height="6.9" viewBox="0 0 6.8 6.9"><rect x="0.4" y="0.4" width="6" height="6.1" rx="0.8" fill="#5a5a5a"/><rect x="1.4" y="1.3" width="3.9" height="4.3" fill="#9a9a9a"/><rect x="5.4" y="3" width="1" height="1" fill="#cdcdcd"/></svg>
<div class="t" style="left:535px;top:392.5px;color:#2a2a2a">Console</div>
<svg style="left:767px;top:393.3px" width="1.6" height="6.5" viewBox="0 0 1.6 6.5"><circle cx="0.8" cy="0.75" r="0.75" fill="#444"/><circle cx="0.8" cy="3.25" r="0.75" fill="#444"/><circle cx="0.8" cy="5.75" r="0.75" fill="#444"/></svg>
<div class="a" style="left:517.8px;top:404px;width:258.4px;height:14px;background:#c8c8c8"></div>
<div class="a" style="left:517.8px;top:404px;width:73.5px;height:13.4px;background:#cdcdcd"></div>
<div class="a" style="left:517.8px;top:417.2px;width:258.4px;height:0.8px;background:#b0b0b0"></div>
<div class="t" style="left:520.6px;top:406.5px;color:#2a2a2a">Clear</div>
<div class="a" style="left:543px;top:408px;width:0.8px;height:7px;background:#a8a8a8"></div>
<svg style="left:546.8px;top:410px" width="4.2" height="2.9" viewBox="0 0 4.2 2.9"><path d="M0 0H4.2L2.1 2.9Z" fill="#555"/></svg>
<div class="a" style="left:554.2px;top:404px;width:0.8px;height:13.4px;background:#b3b3b3"></div>
<div class="t" style="left:558.1px;top:406.5px;color:#2a2a2a">Collapse</div>
<div class="a" style="left:591px;top:404px;width:0.8px;height:13.4px;background:#b3b3b3"></div>
<div class="a" style="left:711px;top:404.3px;width:20.6px;height:13.5px;background:#e4e4e4"></div>
<svg style="left:714.2px;top:406.3px" width="9" height="9.4" viewBox="0 0 8 8.4"><circle cx="4" cy="4" r="3.9" fill="#8f8f8f"/><rect x="3.4" y="1.6" width="1.2" height="3.3" fill="#e4e4e4"/><rect x="3.4" y="5.6" width="1.2" height="1.1" fill="#e4e4e4"/><path d="M4.5 7.8L7 8.4L6.2 6.5Z" fill="#8f8f8f"/></svg>
<div class="t" style="left:725.2px;top:406.4px;color:#2a2a2a;font-size:8.4px">0</div>
<div class="a" style="left:732.8px;top:404.3px;width:20.6px;height:13.5px;background:#e4e4e4"></div>
<svg style="left:735.8px;top:406.4px" width="9" height="8.6" viewBox="0 0 8.2 7.6"><path d="M4.1 0L8.2 7.6H0Z" fill="#8f8f8f"/><rect x="3.6" y="2.4" width="1" height="2.8" fill="#e4e4e4"/><rect x="3.6" y="5.8" width="1" height="1" fill="#e4e4e4"/></svg>
<div class="t" style="left:747.0px;top:406.4px;color:#2a2a2a;font-size:8.4px">0</div>
<div class="a" style="left:754.2px;top:404.3px;width:20.6px;height:13.5px;background:#e4e4e4"></div>
<svg style="left:757.4px;top:406.3px" width="9" height="9.4" viewBox="0 0 8 8.4"><circle cx="4" cy="4" r="3.9" fill="#8f8f8f"/><rect x="3.4" y="1.6" width="1.2" height="3.3" fill="#e4e4e4"/><rect x="3.4" y="5.6" width="1.2" height="1.1" fill="#e4e4e4"/></svg>
<div class="t" style="left:768.4px;top:406.4px;color:#2a2a2a;font-size:8.4px">0</div>
<div class="a" style="left:517.8px;top:418px;width:258.4px;height:140px;background:#c8c8c8"></div>
<div class="a" style="left:517.8px;top:515.9px;width:258.4px;height:1px;background:#a9a9a9"></div>
<div class="a" style="left:0;top:558.6px;width:1024px;height:13.8px;background:#dedede"></div>
<div class="a" style="left:972.6px;top:559.5px;width:0.8px;height:12px;background:#bdbdbd"></div>
<div class="a" style="left:990.0px;top:559.5px;width:0.8px;height:12px;background:#bdbdbd"></div>
<div class="a" style="left:1006.9px;top:559.5px;width:0.8px;height:12px;background:#bdbdbd"></div>
<svg style="left:977.2px;top:561.2px" width="9.6" height="9" viewBox="0 0 9.6 9"><ellipse cx="4.8" cy="5" rx="3" ry="3.6" fill="#d8a82a"/><path d="M0.5 2.5L2.5 3.8M9.1 2.5L7.1 3.8M0.3 5.3H2M9.3 5.3H7.6M0.8 8.3L2.5 7M8.8 8.3L7.1 7M3 0.5L3.8 1.8M6.6 0.5L5.8 1.8" stroke="#d8a82a" stroke-width="0.9"/></svg>
<svg style="left:994.8px;top:561px" width="9.4" height="9.4" viewBox="0 0 9.4 9.4"><ellipse cx="4.4" cy="1.8" rx="3.8" ry="1.6" fill="#4a4a4a"/><path d="M0.6 2.2V7.4Q4.4 9.6 8.2 7.4V2.2Q4.4 4.4 0.6 2.2Z" fill="#4a4a4a"/><path d="M0.6 4.6Q4.4 6.6 8.2 4.6" stroke="#dedede" stroke-width="0.7" fill="none"/><path d="M6.2 6.4L9 9" stroke="#4a4a4a" stroke-width="1"/></svg>
<svg style="left:1010.8px;top:561.2px" width="9.2" height="9.2" viewBox="0 0 9.2 9.2"><circle cx="4.6" cy="4.6" r="4.1" fill="none" stroke="#555" stroke-width="0.85"/><path d="M2.7 4.7L4.1 6L6.5 3.3" fill="none" stroke="#555" stroke-width="0.9"/></svg>
<div class="a" style="left:0;top:572.3px;width:1024px;height:2.7px;background:#c6c6c6"></div><div class="a" style="left:0;top:572.4px;width:1024px;height:1px;background:#adadad"></div>
<div class="a" style="left:0;top:573px;width:17px;height:2px;background:#8a8a8a"></div>
<div class="a" style="left:26px;top:573.3px;width:34px;height:1.7px;background:#6e6e6e;opacity:0.6"></div>
<div class="a" style="left:145px;top:573.3px;width:23px;height:1.7px;background:#6e6e6e;opacity:0.6"></div>
<div class="a" style="left:220px;top:573.3px;width:12px;height:1.7px;background:#6e6e6e;opacity:0.6"></div>
<div class="a" style="left:304px;top:573.3px;width:38px;height:1.7px;background:#6e6e6e;opacity:0.6"></div>
<div class="a" style="left:470px;top:573.3px;width:8px;height:1.7px;background:#6e6e6e;opacity:0.6"></div>
</body></html>
